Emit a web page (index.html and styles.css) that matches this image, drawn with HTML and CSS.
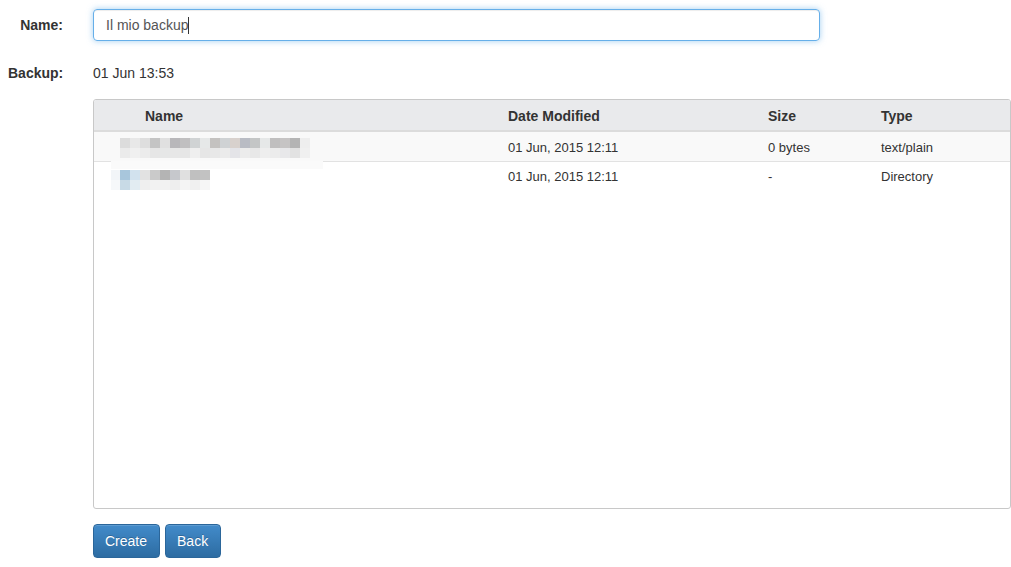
FILE: index.html
```html
<!DOCTYPE html>
<html lang="it">
<head>
    <meta charset="UTF-8">
    <title>Backup</title>
    <link rel="stylesheet" href="styles.css">
</head>
<body>
    <form class="backup-form">
        <div class="form-row">
            <label class="form-label" for="name">Name:</label>
            <div class="field">
                <div class="text-input" id="name">Il mio backup<span class="caret"></span></div>
            </div>
        </div>
        <div class="form-row static">
            <span class="form-label">Backup:</span>
            <div class="field">01 Jun 13:53</div>
        </div>
        <div class="form-row">
            <span class="form-label"></span>
            <div class="field">
                <div class="file-table">
                    <table>
                        <thead>
                            <tr>
                                <th class="col-icon"></th>
                                <th class="col-name">Name</th>
                                <th class="col-date">Date Modified</th>
                                <th class="col-size">Size</th>
                                <th class="col-type">Type</th>
                            </tr>
                        </thead>
                        <tbody>
                            <tr class="odd">
                                <td class="name-cell" colspan="2"><span class="blur blur-file"></span><span class="blur-halo"></span></td>
                                <td>01 Jun, 2015 12:11</td>
                                <td>0 bytes</td>
                                <td>text/plain</td>
                            </tr>
                            <tr>
                                <td class="name-cell" colspan="2"><span class="blur blur-dir"></span></td>
                                <td>01 Jun, 2015 12:11</td>
                                <td>-</td>
                                <td>Directory</td>
                            </tr>
                        </tbody>
                    </table>
                </div>
                <div class="actions">
                    <button type="button" class="btn">Create</button>
                    <button type="button" class="btn">Back</button>
                </div>
            </div>
        </div>
    </form>
</body>
</html>
```

FILE: styles.css
```css
body {
    margin: 0;
    font-family: "Liberation Sans", Arial, sans-serif;
    font-size: 14px;
    color: #333;
    background: #fff;
}
.backup-form {
    padding: 9px 0 0 8px;
}
.form-row {
    display: grid;
    grid-template-columns: 55px 1fr;
    column-gap: 30px;
    align-items: center;
}
.form-row.static {
    margin-top: 24px;
    margin-bottom: 18px;
}
.form-label {
    font-weight: bold;
    text-align: right;
}
.form-row:last-child {
    align-items: start;
}
.text-input {
    width: 727px;
    height: 32px;
    box-sizing: border-box;
    border: 1px solid #66afe9;
    border-radius: 4px;
    box-shadow: inset 0 1px 1px rgba(0,0,0,0.075), 0 0 6px rgba(102,175,233,0.6);
    padding: 6px 12px;
    line-height: 18px;
    color: #555;
}
.caret {
    display: inline-block;
    width: 1px;
    height: 17px;
    background: #333;
    vertical-align: -4px;
}
.file-table {
    width: 918px;
    height: 410px;
    box-sizing: border-box;
    border: 1px solid #c8c8c8;
    border-radius: 3px;
    overflow: hidden;
}
table {
    width: 100%;
    border-collapse: collapse;
}
th {
    background: #e9eaec;
    text-align: left;
    font-size: 14px;
    height: 28px;
    padding: 2px 8px 0;
    border-bottom: 2px solid #dcdcdc;
    color: #333;
}
td {
    font-size: 13px;
    height: 29px;
    padding: 0 8px;
    border-bottom: 1px solid #e2e2e2;
}
tr.odd td {
    height: 28px;
    padding-top: 1px;
    background: #f9f9f9;
}
tbody tr:last-child td {
    border-bottom: none;
}
.col-icon {
    width: 27px;
}
.col-name {
    width: 347px;
}
.col-date {
    width: 244px;
}
.col-size {
    width: 97px;
}
.name-cell {
    position: relative;
    padding-left: 26px;
}
.blur {
    display: block;
    height: 20px;
}
.blur-file {
    width: 190px;
    margin-top: 2px;
    background:
        linear-gradient(90deg, #dcdcdc 0 10px, #e8e8e8 10px 20px, #dedede 20px 30px, #c4c4c4 30px 40px, #e0e0e0 40px 50px, #b8b7ba 50px 60px, #c0bfc0 60px 70px, #d0d3d4 70px 80px, #e6e8e8 80px 90px, #c4c2c0 90px 100px, #cfd2d4 100px 110px, #d8d1cd 110px 120px, #b9bcc4 120px 130px, #c4c6c6 130px 140px, #e6e8e8 140px 150px, #c0bfbf 150px 160px, #c6c4c4 160px 170px, #b4b4b4 170px 180px, #eeeeee 180px 190px) top / 100% 10px no-repeat,
        linear-gradient(90deg, #ebebeb 0 10px, #f0f0f0 10px 20px, #ececec 20px 30px, #e6e6e6 30px 40px, #e6e7e7 40px 50px, #e7e7e7 50px 60px, #e6e6e6 60px 70px, #efefef 70px 80px, #e6e6e6 80px 90px, #e8e8e8 90px 100px, #ebebeb 100px 110px, #e4e4e8 110px 120px, #ececec 120px 130px, #e8e8e8 130px 140px, #eeeeee 140px 150px, #ececec 150px 160px, #e8e8ea 160px 170px, #e2e2e2 170px 180px, #f0f0f0 180px 190px) bottom / 100% 10px no-repeat;
}
.blur-halo {
    position: absolute;
    left: 17px;
    top: 29px;
    width: 212px;
    height: 8px;
    background: #fafafa;
}
.blur-dir {
    width: 99px;
    margin-left: -9px;
    margin-top: 6px;
    background:
        linear-gradient(90deg, #f2f5f8 0 9px, #a8c6dc 9px 19px, #d2e2ee 19px 29px, #e2e2e2 29px 39px, #cacaca 39px 49px, #b4b4b4 49px 59px, #c6c8cc 59px 69px, #e0e0e0 69px 79px, #c0c0c0 79px 89px, #c2c2c2 89px 99px) top / 100% 10px no-repeat,
        linear-gradient(90deg, #f6f8fa 0 9px, #c8dae6 9px 19px, #e2ecf2 19px 29px, #efefef 29px 39px, #f2f2f2 39px 49px, #f2f2f2 49px 59px, #eeeeee 59px 69px, #f4f4f4 69px 79px, #f0f0f0 79px 89px, #f6f6f6 89px 99px) bottom / 100% 10px no-repeat;
}
.actions {
    display: flex;
    gap: 5px;
    margin-top: 15px;
}
.btn {
    font-family: "Liberation Sans", Arial, sans-serif;
    font-size: 14px;
    color: #fff;
    height: 34px;
    padding: 0 12px 0 11px;
    border: 1px solid #2b669a;
    border-radius: 4px;
    background: linear-gradient(#428bca, #2d6ca2);
    text-shadow: 0 -1px 0 rgba(0,0,0,0.2);
    box-shadow: inset 0 1px 0 rgba(255,255,255,0.15);
}
```
